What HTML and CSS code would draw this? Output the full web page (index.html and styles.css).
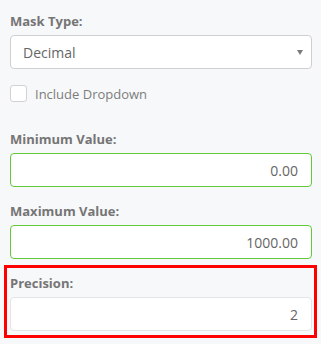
FILE: index.html
```html
<!DOCTYPE html>
<html>
<head>
<meta charset="utf-8">
<link rel="stylesheet" href="styles.css">
</head>
<body>
<div class="panel">
  <div class="field">
    <div class="label">Mask Type:</div>
    <div class="select">
      <span class="select-text">Decimal</span>
      <span class="caret"></span>
    </div>
  </div>
  <label class="check-row">
    <span class="checkbox"></span>
    <span class="check-text">Include Dropdown</span>
  </label>
  <div class="field">
    <div class="label">Minimum Value:</div>
    <div class="input valid">0.00</div>
  </div>
  <div class="field">
    <div class="label">Maximum Value:</div>
    <div class="input valid">1000.00</div>
  </div>
  <div class="field highlight">
    <div class="label">Precision:</div>
    <div class="input">2</div>
  </div>
</div>
</body>
</html>
```
FILE: styles.css
```css
html, body {
  margin: 0;
  padding: 0;
  background: #f7f8fa;
}
body {
  font-family: "Open Sans", "Liberation Sans", sans-serif;
  width: 321px;
  height: 344px;
  overflow: hidden;
}
.panel {
  padding: 12px 9px 0 10px;
  display: flex;
  flex-direction: column;
}
.field {
  display: flex;
  flex-direction: column;
  margin-bottom: 15px;
  position: relative;
}
.label {
  font-size: 13px;
  line-height: 18px;
  font-weight: 700;
  color: #757575;
  margin-bottom: 5px;
}
.select, .input {
  box-sizing: border-box;
  height: 34px;
  background: #fff;
  border: 1px solid #cfcfcf;
  border-radius: 4px;
  font-size: 14px;
  color: #666;
  display: flex;
  align-items: center;
}
.select {
  padding-left: 12px;
  position: relative;
}
.caret {
  position: absolute;
  right: 8px;
  top: 14px;
  width: 0;
  height: 0;
  border-left: 3px solid transparent;
  border-right: 3px solid transparent;
  border-top: 5px solid #7a7a7a;
}
.check-row {
  display: flex;
  align-items: center;
  gap: 8px;
  margin-top: 1px;
  margin-bottom: 28px;
  height: 17px;
}
.checkbox {
  box-sizing: border-box;
  width: 17px;
  height: 17px;
  border: 1px solid #d2d2d2;
  border-radius: 3px;
  background: #fff;
}
.check-text {
  font-size: 13px;
  color: #7d7d7d;
}
.input {
  justify-content: flex-end;
  padding-right: 13px;
}
.input.valid {
  border-color: #62c93a;
}
.highlight .input {
  border-color: #e2e4e6;
}
.highlight::after {
  content: "";
  position: absolute;
  top: -9px;
  left: -6px;
  right: -5px;
  bottom: -7px;
  border: 3px solid #f00;
  pointer-events: none;
}
```
